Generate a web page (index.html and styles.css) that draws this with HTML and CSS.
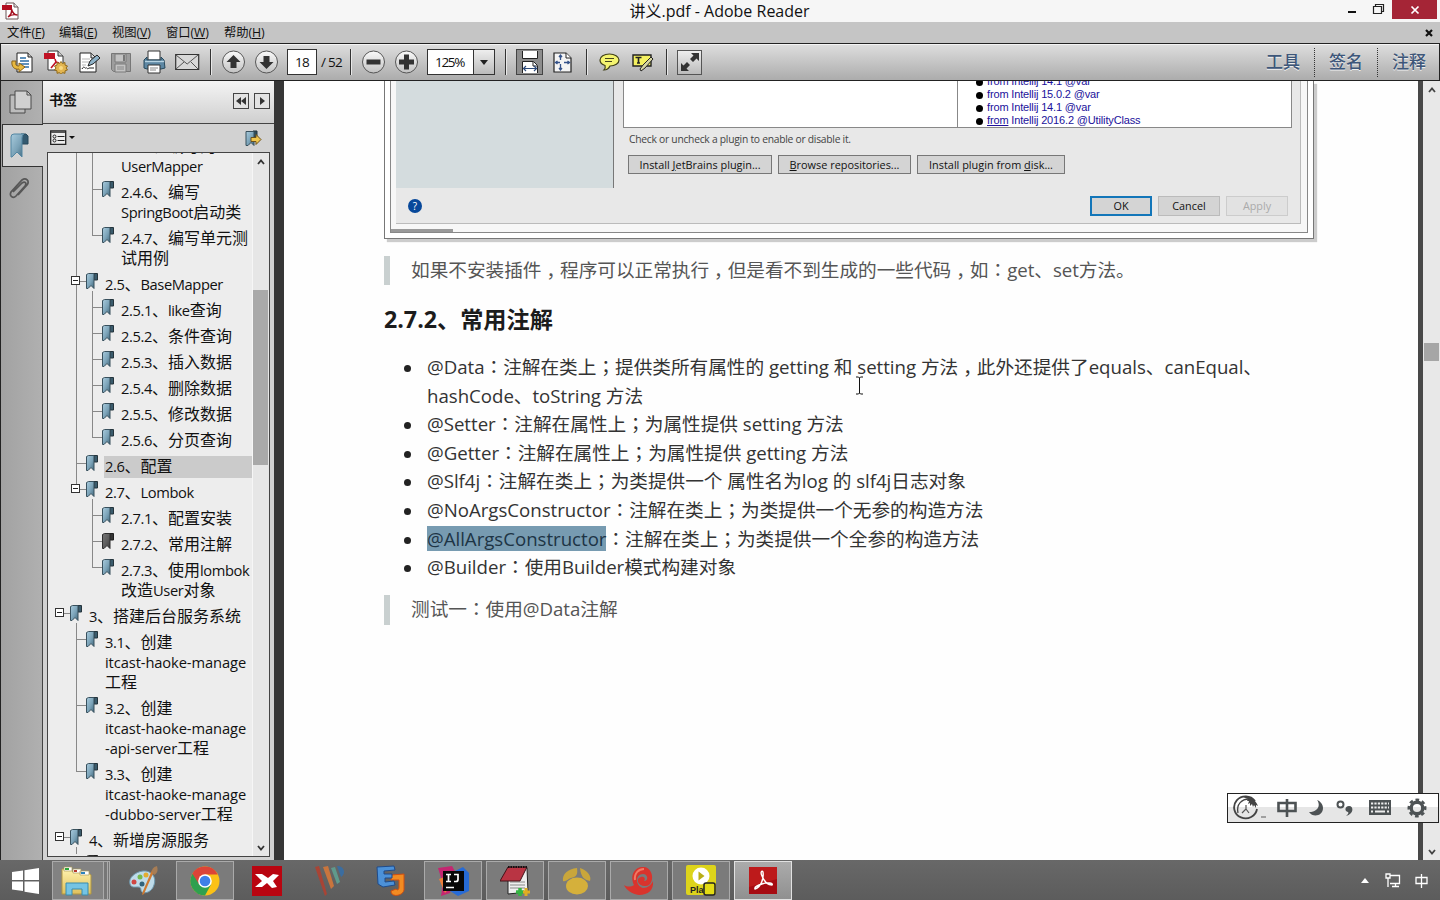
FILE: index.html
```html
<!DOCTYPE html>
<html lang="zh-CN">
<head>
<meta charset="utf-8">
<title>讲义.pdf - Adobe Reader</title>
<link rel="stylesheet" href="styles.css">
</head>
<body>
<svg class="defs" width="0" height="0">
  <defs>
    <linearGradient id="ribbon" x1="0" x2="1" y1="0" y2="1"><stop offset="0" stop-color="#a9cbdd"/><stop offset=".55" stop-color="#7ba3b8"/><stop offset="1" stop-color="#41677c"/></linearGradient>
    <linearGradient id="round" x1="0" x2="0" y1="0" y2="1"><stop offset="0" stop-color="#fafafa"/><stop offset="1" stop-color="#c2c2c2"/></linearGradient>
    <linearGradient id="folder" x1="0" x2="0" y1="0" y2="1"><stop offset="0" stop-color="#fff2ae"/><stop offset="1" stop-color="#dfc05c"/></linearGradient>
    <symbol id="bm" viewBox="0 0 13 17"><path d="M8 .5h3.500v6.500H8z" fill="#3a5b6c" stroke="#25343c"/><path d="M.5 1.500l2-1H8v15l-3-3-3 3H.5z" fill="url(#ribbon)" stroke="#38505d"/></symbol>
  </defs>
</svg>

<header class="titlebar">
  <svg class="app-icon" width="17" height="18" viewBox="0 0 17 18"><path d="M4 1h8l4 4v12H4z" fill="#fff" stroke="#6b5557"/><path d="M12 1v4h4" fill="#ddd" stroke="#6b5557"/><path d="M0 3h10v5H0z" fill="#b20d20"/><path d="M6 15c3-2 4-5 3.500-8 1 4 3 6 6 6-4-1-7 0-9.500 2z" fill="none" stroke="#a51020" stroke-width="1.400"/></svg>
  <h1>讲义.pdf - Adobe Reader</h1>
  <div class="winbtns">
    <svg width="44" height="22" viewBox="0 0 44 22"><path d="M0 12h8" stroke="#111" stroke-width="2"/><path d="M25.500 6.500h8v7h-8zM27.500 6V4.500h8v7H34" fill="none" stroke="#222" stroke-width="1.200"/></svg>
    <div class="close"><svg width="10" height="10" viewBox="0 0 10 10"><path d="M1.500 1.500l7 7m0-7l-7 7" stroke="#fff" stroke-width="1.700"/></svg></div>
  </div>
</header>

<nav class="menubar">
  <span>文件(<u>F</u>)</span><span>编辑(<u>E</u>)</span><span>视图(<u>V</u>)</span><span>窗口(<u>W</u>)</span><span>帮助(<u>H</u>)</span>
  <svg class="doc-close" width="8" height="8" viewBox="0 0 8 8"><path d="M1 1l6 6m0-6l-6 6" stroke="#111" stroke-width="2.200"/></svg>
</nav>

<div class="toolbar">
  <svg width="23" height="23" viewBox="0 0 23 23"><path d="M6 2h11l4 4v15H6z" fill="#fff" stroke="#222"/><path d="M17 2v4h4" fill="#ccc" stroke="#222"/><path d="M9 7h6M9 10h9M9 13h9M12 16h6" stroke="#2c6da5" stroke-width="1.500"/><path d="M1 10c-1 6 3 9 7 8v3l6-5-6-4v3c-3 0-4-1-3-5z" fill="#e8b93f" stroke="#8a6318"/></svg>
  <svg width="24" height="24" viewBox="0 0 24 24"><path d="M4 1h10l5 5v14H4z" fill="#fff" stroke="#333"/><path d="M14 1v5h5" fill="#ccc" stroke="#333"/><path d="M0 3h11v6H0z" fill="#c01325"/><path d="M7 18l5-6-1-3M12 12l3 1" fill="none" stroke="#c01325" stroke-width="1.600"/><path d="M17 11.500l1.500 2 2.500-1 0 2.600 2.500.9-1.500 2 1.500 2-2.500.8v2.500l-2.500-.7-1.500 2-1.500-2-2.500.7v-2.500l-2.500-.8 1.500-2-1.500-2 2.500-.9v-2.600l2.500 1z" fill="#e2b550" stroke="#906a1c"/><circle cx="17" cy="18" r="2" fill="#f9d980"/></svg>
  <svg width="22" height="23" viewBox="0 0 22 23"><path d="M1 2h11l5 5v14H1z" fill="#fff" stroke="#222"/><path d="M12 2v5h4" fill="#ddd" stroke="#222"/><path d="M3 8h8M3 11h7M3 14h4" stroke="#b5b5b5"/><path d="M3 18c2-4 3 0 4-1s1 2 3 0h5" fill="none" stroke="#222"/><path d="M9 15l2-5 7-6 3 3-7 6z" fill="#8eb2c8" stroke="#222"/></svg>
  <svg width="20" height="21" viewBox="0 0 20 21"><path d="M.5 1.500h19v18h-17l-2-2z" fill="#9d9d9d" stroke="#777"/><path d="M4 2h11v8H4zM4 12h11v8H4z" fill="#c3c3c3" stroke="#7a7a7a"/><path d="M12 3h2v6h-2z" fill="#777"/><path d="M6 15h7M6 17h7" stroke="#888"/></svg>
  <svg width="23" height="24" viewBox="0 0 23 24"><path d="M5 1h12v9H5z" fill="#fff" stroke="#333"/><path d="M1 10l3-3v3h14V7l3 3 1 8-4 1H4l-3-1z" fill="#5d87a3" stroke="#27495d"/><path d="M2 11.500h19" stroke="#b7d3e2" stroke-width="1.400"/><path d="M5 15h12v8H5z" fill="#fff" stroke="#333"/><path d="M7 18h8M7 20h6" stroke="#888"/></svg>
  <svg width="25" height="18" viewBox="0 0 25 18"><path d="M.7 1.500h23v15H.7z" fill="#d8d8d8" stroke="#333" stroke-width="1.200"/><path d="M1 2l11.200 9L23 2M1 16l8-7M23 16l-7-7" fill="none" stroke="#555"/></svg>
  <i class="sep"></i>
  <svg width="24" height="24" viewBox="0 0 24 24"><circle cx="11.500" cy="12" r="11" fill="url(#round)" stroke="#555"/><path d="M11.500 5l7 7h-4v6h-6v-6h-4z" fill="#333"/></svg>
  <svg width="24" height="24" viewBox="0 0 24 24"><circle cx="11.500" cy="12" r="11" fill="url(#round)" stroke="#555"/><path d="M11.500 19l7-7h-4V6h-6v6h-4z" fill="#333"/></svg>
  <div class="field page">18</div>
  <span class="total">/ 52</span>
  <i class="sep"></i>
  <svg width="24" height="24" viewBox="0 0 24 24"><circle cx="11.500" cy="12" r="11" fill="url(#round)" stroke="#555"/><path d="M4.500 9.500h14v5h-14z" fill="#333"/></svg>
  <svg width="24" height="24" viewBox="0 0 24 24"><circle cx="11.500" cy="12" r="11" fill="url(#round)" stroke="#555"/><path d="M9 4.500h5v5h5v5h-5v5H9v-5H4v-5h5z" fill="#333"/></svg>
  <div class="field zoom"><span>125%</span><b><svg width="8" height="5" viewBox="0 0 8 5"><path d="M0 0h8L4 5z" fill="#222"/></svg></b></div>
  <i class="sep"></i>
  <div class="pressed"><svg width="18" height="22" viewBox="0 0 18 22"><path d="M1.500 0v7.500h15V0" fill="#fff" stroke="#222"/><path d="M1.500 22V10.500h11l4 4V22" fill="#fff" stroke="#222"/><path d="M12 11v4h4" fill="none" stroke="#222"/><path d="M3 17.500h12M5 15l-2.500 2.500L5 20M13 15l2.500 2.500L13 20" fill="none" stroke="#2d4a7a" stroke-width="1.200"/></svg></div>
  <svg width="19" height="21" viewBox="0 0 19 21"><path d="M1 1h12l5 5v14H1z" fill="#f4f4f4" stroke="#222" stroke-width="1.200"/><path d="M13 1v5h5" fill="#fff" stroke="#222"/><path d="M7.500 3v5M7.500 12v6M2.500 10.500H7M11 10.500h5.500M6 5l1.500-2L9 5M6 16l1.500 2L9 16M4.500 9l-2 1.500 2 1.500M14.500 9l2 1.500-2 1.500" fill="none" stroke="#34528a" stroke-width="1.300"/></svg>
  <i class="sep"></i>
  <svg width="21" height="18" viewBox="0 0 21 18"><path d="M10.500 1c5 0 9.500 2.500 9.500 6s-4 6-9 6c-1 2-3 4-6 4 1-1 1.500-3 1-4.500C3 11.500 1 9.500 1 7c0-3.500 4-6 9.500-6z" fill="#f4f470" stroke="#3f3f18" stroke-width="1.200"/><path d="M6 5.500h9M6 8.500h7" stroke="#44441d" stroke-width="1.200"/></svg>
  <svg width="22" height="19" viewBox="0 0 22 19"><path d="M1 2h18v11H1z" fill="#f4f160" stroke="#222" stroke-width="1.400"/><path d="M3.500 4.500h6M6.500 4v6M5 10h3" stroke="#222" stroke-width="1.600"/><path d="M8 16l3-4 8-8 2 2-8 9-4 3z" fill="#d6d6a2" stroke="#222"/></svg>
  <i class="sep"></i>
  <div class="full"><svg width="22" height="22" viewBox="0 0 22 22"><path d="M20 2v8l-2.500-2.500-3.500 3.500-3-3 3.500-3.500L12 2zM2 20v-8l2.500 2.500L8 11l3 3-3.500 3.500L10 20z" fill="#333"/></svg></div>
  <span class="tool">工具</span><i class="dots"></i><span class="tool">签名</span><i class="dots"></i><span class="tool">注释</span>
</div>

<main class="work">
  <aside class="rail">
    <div class="rail-item"><svg width="23" height="25" viewBox="0 0 23 25"><path d="M1 5h15v18H1z" fill="#bcbcbc" stroke="#4a4a4a"/><path d="M6 1h12l4 4v14H6z" fill="#d0d0d0" stroke="#4a4a4a"/><path d="M18 1v4h4" fill="none" stroke="#4a4a4a"/></svg></div>
    <div class="rail-item on"><svg width="19" height="25" viewBox="0 0 19 25"><path d="M11 1h5l2 2v8h-6z" fill="#345a70" stroke="#26485a"/><path d="M1 4q0-3 3-3h10q-2 1-2 4v19l-5-5-5 5H1z" fill="url(#ribbon)" stroke="#5386a2"/></svg></div>
    <div class="rail-item clip"><svg width="24" height="24" viewBox="0 0 24 24"><path d="M6 15L15 6c3-2 5 0 3 3L9 19c-3 3-7 0-5-4L15 3c4-3 8 1 5 5l-9 10" fill="none" stroke="#575757" stroke-width="1.700"/></svg></div>
  </aside>

  <section class="panel">
    <div class="panel-head"><h2>书签</h2>
      <i class="mini"><svg width="10" height="8" viewBox="0 0 10 8"><path d="M5 0v8L0 4zM10 0v8L5 4z" fill="#333"/></svg></i>
      <i class="mini"><svg width="5" height="8" viewBox="0 0 5 8"><path d="M0 0v8l5-4z" fill="#333"/></svg></i>
    </div>
    <div class="panel-tools">
      <svg width="26" height="16" viewBox="0 0 26 16"><path d="M.7 1h15v13.300H.7z" fill="#ededed" stroke="#222" stroke-width="1.300"/><path d="M1 2.500h14" stroke="#555"/><circle cx="4.500" cy="6.500" r="1.500" fill="none" stroke="#222"/><circle cx="4.500" cy="10.500" r="1.500" fill="none" stroke="#222"/><path d="M7.500 6.500h7M7.500 10.500h7" stroke="#222"/><path d="M19 6h6l-3 3z" fill="#111"/></svg>
      <svg width="17" height="17" viewBox="0 0 17 17"><path d="M8 1h4v6H8z" fill="#2f4c5b" stroke="#25343c"/><path d="M1 1.500h8v14l-3-3-3 3H1z" fill="url(#ribbon)" stroke="#38505d"/><path d="M6 7.500h5V4.500l5 5-5 5v-3H6z" fill="#f0c64c" stroke="#6d521b"/></svg>
    </div>
    <div class="tree-box">
      <div class="tree-view">
        <ul class="tree">
          <li class="open bare"><ul>
            <li class="bare"><ul>
              <li><svg class="bm"><use href="#bm"/></svg><span class="t"><s>2.4.5</s>、编写的<br><s>UserMapper</s></span></li>
              <li><svg class="bm"><use href="#bm"/></svg><span class="t"><s>2.4.6</s>、编写<br><s>SpringBoot</s>启动类</span></li>
              <li><svg class="bm"><use href="#bm"/></svg><span class="t"><s>2.4.7</s>、编写单元测<br>试用例</span></li>
            </ul></li>
            <li><i class="box"></i><svg class="bm"><use href="#bm"/></svg><span class="t"><s>2.5</s>、<s>BaseMapper</s></span><ul>
              <li><svg class="bm"><use href="#bm"/></svg><span class="t"><s>2.5.1</s>、<s>like</s>查询</span></li>
              <li><svg class="bm"><use href="#bm"/></svg><span class="t"><s>2.5.2</s>、条件查询</span></li>
              <li><svg class="bm"><use href="#bm"/></svg><span class="t"><s>2.5.3</s>、插入数据</span></li>
              <li><svg class="bm"><use href="#bm"/></svg><span class="t"><s>2.5.4</s>、删除数据</span></li>
              <li><svg class="bm"><use href="#bm"/></svg><span class="t"><s>2.5.5</s>、修改数据</span></li>
              <li><svg class="bm"><use href="#bm"/></svg><span class="t"><s>2.5.6</s>、分页查询</span></li>
            </ul></li>
            <li><svg class="bm"><use href="#bm"/></svg><span class="t sel"><s>2.6</s>、配置</span></li>
            <li><i class="box"></i><svg class="bm"><use href="#bm"/></svg><span class="t"><s>2.7</s>、<s>Lombok</s></span><ul>
              <li><svg class="bm"><use href="#bm"/></svg><span class="t"><s>2.7.1</s>、配置安装</span></li>
              <li><svg class="bm current"><use href="#bm"/></svg><span class="t"><s>2.7.2</s>、常用注解</span></li>
              <li><svg class="bm"><use href="#bm"/></svg><span class="t"><s>2.7.3</s>、使用<s>lombok</s><br>改造<s>User</s>对象</span></li>
            </ul></li>
          </ul></li>
          <li><i class="box"></i><svg class="bm"><use href="#bm"/></svg><span class="t"><s>3</s>、搭建后台服务系统</span><ul>
            <li><svg class="bm"><use href="#bm"/></svg><span class="t"><s>3.1</s>、创建<br><s class="w">itcast-haoke-manage</s><br>工程</span></li>
            <li><svg class="bm"><use href="#bm"/></svg><span class="t"><s>3.2</s>、创建<br><s class="w">itcast-haoke-manage</s><br><s class="w">-api-server</s>工程</span></li>
            <li><svg class="bm"><use href="#bm"/></svg><span class="t"><s>3.3</s>、创建<br><s class="w">itcast-haoke-manage</s><br><s class="w">-dubbo-server</s>工程</span></li>
          </ul></li>
          <li><i class="box"></i><svg class="bm"><use href="#bm"/></svg><span class="t"><s>4</s>、新增房源服务</span><ul>
            <li><svg class="bm current"><use href="#bm"/></svg></li>
          </ul></li>
        </ul>
      </div>
      <div class="tree-scroll">
        <svg width="8" height="6" viewBox="0 0 8 6"><path d="M1 5l3-3.500L7 5" fill="none" stroke="#333" stroke-width="1.800"/></svg>
        <i class="thumb"></i>
        <svg width="8" height="6" viewBox="0 0 8 6"><path d="M1 1l3 3.500L7 1" fill="none" stroke="#333" stroke-width="1.800"/></svg>
      </div>
    </div>
  </section>

  <div class="splitter"><i></i></div>

  <article class="page-view">
    <div class="shot"><div class="shot-in"><div class="dialog">
      <div class="dlg-top">
        <div class="dlg-list"></div>
        <div class="dlg-main">
          <div class="dlg-panes"><div class="pane-a"></div>
            <ul class="pane-b"><li>from Intellij 14.1 @var</li><li>from Intellij 15.0.2 @var</li><li>from Intellij 14.1 @var</li><li><u>from</u> Intellij 2016.2 @UtilityClass</li></ul></div>
          <p class="hint">Check or uncheck a plugin to enable or disable it.</p>
          <div class="dlg-btns"><span>Install <u>J</u>etBrains plugin...</span><span><u>B</u>rowse repositories...</span><span>Install plugin from <u>d</u>isk...</span></div>
        </div>
      </div>
      <div class="dlg-foot"><i class="help">?</i><span class="ok">OK</span><span>Cancel</span><span class="off">Apply</span></div>
    </div><i class="hbar"></i></div></div>

    <blockquote class="q1">如果不安装插件<i class="cm">，</i>程序可以正常执行<i class="cm">，</i>但是看不到生成的一些代码<i class="cm">，</i>如<i class="pc">：</i>get、set方法。</blockquote>
    <h3>2.7.2、常用注解</h3>
    <ul class="notes">
      <li class="two">@Data<i class="pc">：</i>注解在类上<i class="pc">；</i>提供类所有属性的 getting 和 setting 方法<i class="cm">，</i>此外还提供了equals、canEqual、<br>hashCode、toString 方法</li>
      <li>@Setter<i class="pc">：</i>注解在属性上<i class="pc">；</i>为属性提供 setting 方法</li>
      <li>@Getter<i class="pc">：</i>注解在属性上<i class="pc">；</i>为属性提供 getting 方法</li>
      <li>@Slf4j<i class="pc">：</i>注解在类上<i class="pc">；</i>为类提供一个 属性名为log 的 slf4j日志对象</li>
      <li>@NoArgsConstructor<i class="pc">：</i>注解在类上<i class="pc">；</i>为类提供一个无参的构造方法</li>
      <li><mark>@AllArgsConstructor</mark><i class="pc">：</i>注解在类上<i class="pc">；</i>为类提供一个全参的构造方法</li>
      <li>@Builder<i class="pc">：</i>使用Builder模式构建对象</li>
    </ul>
    <blockquote class="q2">测试一<i class="pc">：</i>使用@Data注解</blockquote>
    <svg class="cursor" width="7" height="19" viewBox="0 0 7 19"><path d="M0 1h2.500l1 1 1-1H7M3.500 2v15M0 18h2.500l1-1 1 1H7" fill="none" stroke="#111"/></svg>
  </article>

  <div class="edge"></div>
  <div class="doc-scroll">
    <svg width="8" height="6" viewBox="0 0 8 6"><path d="M1 5l3-3.500L7 5" fill="none" stroke="#444" stroke-width="1.800"/></svg>
    <i class="thumb"></i>
    <svg width="8" height="6" viewBox="0 0 8 6"><path d="M1 1l3 3.500L7 1" fill="none" stroke="#444" stroke-width="1.800"/></svg>
  </div>
</main>

<div class="ime">
  <svg width="34" height="26" viewBox="0 0 34 26"><path d="M22 6A11.500 11 0 1 0 24 14" fill="none" stroke="#444" stroke-width="1.800"/><path d="M5 18C3 9 9 4 16 4" fill="none" stroke="#444" stroke-width="1.300"/><path d="M10 2c5-2 12 1 15 9l-2-1v3l-2-3-1 2-1-3-2 2v-3l-2 1 1-3-2 0 1-2z" fill="#444"/><path d="M9 18l4-4v-4M13 14l3 4" stroke="#555" fill="none" stroke-width="1.200"/><path d="M28 22h5" stroke="#888" stroke-width="1.500"/></svg>
  <svg width="20" height="20" viewBox="0 0 20 20"><path d="M1.500 5h17v8h-17zM10 1v18" fill="none" stroke="#4d5254" stroke-width="2.600"/></svg>
  <svg width="16" height="18" viewBox="0 0 16 18"><path d="M9 1c4 5 1 12-8 12 4 6 14 4 14-4 0-4-3-7-6-8z" fill="#4d5254"/></svg>
  <svg width="18" height="17" viewBox="0 0 18 17"><circle cx="4.500" cy="4.500" r="3" fill="none" stroke="#4d5254" stroke-width="2"/><path d="M13 6c5 0 5 8-3 10 2-2 3-3 2-4-4-1-3-6 1-6z" fill="#4d5254"/></svg>
  <svg width="22" height="16" viewBox="0 0 22 16"><path d="M0 0h22v15H0z" fill="#4d5254"/><path d="M2 3.500h18M2 7.500h18M2 11.500h2M18 11.500h2" stroke="#eee" stroke-width="2.200" stroke-dasharray="2.200 1.200"/><path d="M6 11.500h10" stroke="#eee" stroke-width="2"/></svg>
  <svg width="20" height="20" viewBox="0 0 20 20"><circle cx="10" cy="10" r="5.800" fill="none" stroke="#4d5254" stroke-width="3.400"/><circle cx="10" cy="10" r="8.200" fill="none" stroke="#4d5254" stroke-width="2.600" stroke-dasharray="3.600 2.840" transform="rotate(-12 10 10)"/></svg>
</div>

<footer class="taskbar">
  <div class="start"><svg width="27" height="26" viewBox="0 0 27 26"><path d="M0 4l11-1.600V12H0zM12.500 2.200L27 0v12H12.500zM0 13.500h11v9.600L0 21.500zM12.500 13.500H27V26l-14.500-2.200z" fill="#fff"/></svg></div>
  <div class="task lit multi"><svg width="32" height="30" viewBox="0 0 32 30"><path d="M1 3h9l2 3h14l4 3v19H1z" fill="url(#folder)" stroke="#b19743"/><path d="M3 1h8v4H3zM12 3h8v4h-8zM19 5h9v4h-9z" fill="#fff" stroke="#a99b5c" stroke-width=".7"/><path d="M4 2h4v2H4z" fill="#2da53b"/><path d="M13 4h3v2h-3z" fill="#b8382c"/><path d="M20 6h4v2h-4z" fill="#2c83bd"/><path d="M5 29V17h22v12h-6v-6H11v6z" fill="#75c4e4" stroke="#3b8cae"/></svg></div>
  <div class="task"><svg width="31" height="30" viewBox="0 0 31 30"><path d="M15 5c8-1 14 6 11 14-2 7-9 9-12 7-2-2 0-5-4-5-3 0-7 1-8-3C0 12 7 6 15 5z" fill="#bfdcea" stroke="#6f98ad"/><circle cx="12" cy="11" r="2.500" fill="#76b94d"/><circle cx="18" cy="9" r="2.500" fill="#e3ad30"/><circle cx="6" cy="16" r="2.500" fill="#d04743"/><circle cx="14" cy="18" r="2.500" fill="#32637c"/><path d="M27 3L16 28l-2 1 1-4L24 4z" fill="#cf7a31"/><path d="M24 6c0-4 2-5 5-6 1 4 1 7-3 9z" fill="#a77d55"/></svg></div>
  <div class="task lit"><svg width="30" height="30" viewBox="0 0 30 30"><circle cx="15" cy="15" r="14.500" fill="#fbc116"/><path d="M15 15L2.400 7.700A14.500 14.500 0 0 0 15 29.500l6-11z" fill="#2fa04f"/><path d="M15 8.500h12.800A14.500 14.500 0 0 0 2.400 7.700L9 18l6-3z" fill="#dc4437"/><circle cx="15" cy="15" r="6.800" fill="#fff"/><circle cx="15" cy="15" r="5.300" fill="#3f7fe8"/></svg></div>
  <div class="task"><svg width="30" height="30" viewBox="0 0 30 30"><path d="M0 0h30v30H0z" fill="#b90510"/><path d="M3 8l7 0 6 4 5-4 6 1-6 6 4 6-5 1-5-5-5 4-7 0 7-6z" fill="#fff"/></svg></div>
  <div class="task"><svg width="33" height="30" viewBox="0 0 33 30"><path d="M2 1l4-1 8 28-2 2z" fill="#a84435"/><path d="M10 1l5-1 6 20-3 3z" fill="#c9753d"/><path d="M18 2l4-1 5 15-3 2z" fill="#5f9a8c"/><path d="M24 0c8 0 9 8 4 11z" fill="#3b6da0"/></svg></div>
  <div class="task"><svg width="30" height="31" viewBox="0 0 30 31"><path d="M15 10l13-1v16c-1 6-13 8-13 1l5-2c2 2 3 0 3-2v-7h-8z" fill="#f28b22" stroke="#cf4e10"/><path d="M1 2l17-1 1 4-11 1v3h8v4H9v4l9-1 1 4-12 2-5-3z" fill="#4c91d8" stroke="#1e4b8b"/></svg></div>
  <div class="task lit"><svg width="32" height="32" viewBox="0 0 32 32"><path d="M1 3l14-2 4 7-6 20-9 3 2-12z" fill="#c42671"/><path d="M2 14l8-3 5 9-7 8z" fill="#ee803b"/><path d="M18 6l8-4 6 6v18l-11 5-8-5z" fill="#276bd6"/><path d="M6 6h21v20H6z" fill="#080808"/><path d="M9 9.500h5M11.500 9v7M9 16.500h5M17 9.500h4v5q0 2-2 2h-2M9 22.500h8" fill="none" stroke="#fff" stroke-width="1.700"/></svg></div>
  <div class="task lit"><svg width="30" height="31" viewBox="0 0 30 31"><path d="M8 3h19l1 24-20 2z" fill="#eee" stroke="#222"/><path d="M10 17h15M10 20h15M10 23h15" stroke="#888"/><path d="M8 2h19l-7 14H0z" fill="#b93443" stroke="#431319"/><path d="M8 2h19" stroke="#111" stroke-width="2" stroke-dasharray="1.500 1"/><path d="M20 23v8M16 27h8" stroke="#35b443" stroke-width="3.500"/><path d="M26 23v8M23 27h7" stroke="#e0ad22" stroke-width="3"/></svg></div>
  <div class="task lit"><svg width="30" height="28" viewBox="0 0 30 28"><ellipse cx="15" cy="19" rx="11" ry="8.500" fill="#d5b03b"/><path d="M1 14C0 7 6 2 15 1c1 7-1 9-6 10-3 1-5 4-8 3zM18 1c7 2 12 8 10 13-5-1-9-3-10-13z" fill="#c9a63b"/></svg></div>
  <div class="task lit"><svg width="32" height="29" viewBox="0 0 32 29"><path d="M1 19c3 2 7 2 10 0C6 8 13 0 21 1c10 1 11 18 2 19-8 1-11-8-5-9 3-1 5 2 3 4 5 0 4-7-1-7-8 0-8 12 0 14 5 0 8-3 10-7 1 9-5 14-14 14C9 28 3 24 1 19z" fill="#d9342d"/><path d="M12 14c-1-7 4-11 9-11" fill="none" stroke="#f17964" stroke-width="2"/></svg></div>
  <div class="task lit"><svg width="30" height="31" viewBox="0 0 30 31"><rect width="30" height="30" rx="2" fill="#ddd41b"/><circle cx="15" cy="11" r="8.500" fill="#fff"/><path d="M12.500 6.500v9l6-4.500z" fill="#b9ae17"/><text x="4" y="28" class="play">Play</text><rect x="18" y="18" width="11" height="12" rx="2" fill="#e3dc14" stroke="#222" stroke-width="1.500"/></svg></div>
  <div class="task lit active"><svg width="28" height="27" viewBox="0 0 28 27"><path d="M0 0h28v27H0z" fill="#a60b12"/><path d="M0 0h28v12L0 20z" fill="#bd1a1b"/><path d="M6 22c6-2 9-10 8-17-1-2-3 0-1 4 2 5 5 9 10 9 2-2-5-3-10-1-4 1-8 3-7 5z" fill="none" stroke="#fff" stroke-width="1.400"/></svg></div>
  <div class="tray">
    <svg width="8" height="5" viewBox="0 0 8 5"><path d="M0 5h8L4 0z" fill="#fff"/></svg>
    <svg width="16" height="15" viewBox="0 0 16 15"><path d="M5 2.500h9.500v8H5M7 13.500h7M10.500 11v3" fill="none" stroke="#fff" stroke-width="1.300"/><path d="M1 1h4v4H1zM3 5v9" fill="none" stroke="#fff" stroke-width="1.300"/></svg>
    <svg width="13" height="14" viewBox="0 0 13 14"><path d="M1 3.500h11v6H1zM6.500 0v14" fill="none" stroke="#fff" stroke-width="1.300"/></svg>
  </div>
</footer>
</body>
</html>
```

FILE: styles.css
```css
* { box-sizing: border-box; }
body { margin: 0; width: 1440px; height: 900px; overflow: hidden; display: flex; flex-direction: column; position: relative; font-family: "Open Sans", "Noto Sans CJK SC", sans-serif; color: #111; }
i { font-style: normal; display: block; }
svg { display: block; flex: none; }
h1, h2, h3, p, ul, blockquote { margin: 0; padding: 0; font-weight: normal; list-style: none; }
.defs { position: absolute; }

/* Window chrome */
.titlebar { flex: none; height: 22px; background: #f6f6f6; display: flex; align-items: flex-start; padding-left: 2px; }
.app-icon { margin-top: 2px; }
.titlebar h1 { flex: 1; text-align: center; font-size: 16px; line-height: 23px; letter-spacing: 0; padding-left: 72px; }
.winbtns { display: flex; }
.winbtns .close { width: 45px; height: 19px; background: #a52536; display: grid; place-items: center; margin-right: 3px; }
.menubar { flex: none; height: 21px; background: #c5c5c5; display: grid; grid-template-columns: 52px 53px 54px 58px 1fr auto; align-items: center; padding: 0 7px 0 7px; font-size: 12.300px; line-height: 20px; }
.menubar span { white-space: nowrap; letter-spacing: -.1px; }

.toolbar { flex: none; height: 38px; border: 1px solid #222; background: linear-gradient(#dedede, #acacac); box-shadow: inset 0 1px #f4f4f4; padding-left: 10px; display: grid; align-items: center; grid-template-columns: 33px 35px 32px 32px 32px 35px 12px 33px 32px 34px 29px 12px 33px 32px 78px 11px 37px 33px 13px 33px 34px 11px 589px 48px 15px 48px 15px 47px; }
.sep { width: 2px; height: 26px; background: #333; border-right: 1px solid #e8e8e8; }
.dots { height: 29px; border-left: 1px dotted #333; }
.field { height: 26px; border: 1px solid #333; background: #fff; font-size: 13.500px; line-height: 24px; letter-spacing: -.8px; }
.field.page { width: 30px; text-align: center; }
.total { font-size: 13.500px; letter-spacing: -.7px; white-space: nowrap; }
.field.zoom { width: 68px; display: flex; }
.field.zoom span { width: 45px; padding-left: 7px; letter-spacing: -1.300px; }
.field.zoom b { flex: 1; border-left: 1px solid #333; background: linear-gradient(#eee, #bbb); display: grid; place-items: center; }
.pressed { width: 27px; height: 26px; background: #8d8d8d; border: 1px solid #444; display: grid; place-items: center; }
.full { width: 25px; height: 25px; border: 1px solid #555; background: linear-gradient(#eee, #bbb); display: grid; place-items: center; }
.tool { color: #3d5679; font-size: 17px; font-weight: 500; line-height: 30px; text-shadow: 0 1px #eee; white-space: nowrap; }

/* Work area */
.work { flex: none; height: 779px; display: flex; background: #333; }
.rail { width: 43px; background: linear-gradient(90deg, #a2a2a2, #b0b0b0); border-left: 1px solid #222; border-right: 1px solid #444; }
.rail-item { height: 43px; display: grid; place-items: center; padding-right: 3px; }
.rail-item.on { background: #d2d2d2; border: 1px solid #333; border-right: 0; margin: 0 -1px 0 1px; padding-right: 7px; }
.rail-item.clip { height: 43px; padding-right: 6px; }
.panel { width: 231px; background: #d2d2d2; display: flex; flex-direction: column; }
.panel-head { height: 43px; border-bottom: 1px solid #444; background: linear-gradient(#f4f4f4, #cfcfcf); display: flex; align-items: center; gap: 5px; padding: 0 4px 3px 6px; }
.panel-head h2 { flex: 1; font-size: 14px; font-weight: bold; line-height: 20px; padding-bottom: 2px; }
.mini { width: 16px; height: 16px; border: 1px solid #444; background: #e2e2e2; display: grid; place-items: center; }
.panel-tools { height: 28px; display: flex; justify-content: space-between; align-items: center; padding: 0 12px 0 7px; }
.tree-box { flex: none; width: 223px; height: 705px; margin-left: 4px; border: 1px solid #444; background: #ededed; display: flex; }
.tree-view { flex: 1; overflow: hidden; font-size: 16px; }
.tree { margin: -17px 0 0 12px; }
.tree li { position: relative; padding-left: 29px; }
.tree li.bare { padding: 0; }
.tree li > ul { margin-left: -13px; }
.tree li.bare > ul { margin-left: 16px; }
.tree .t { display: block; min-height: 26px; line-height: 20px; white-space: nowrap; padding-bottom: 6px; }
.tree .t.sel { background: linear-gradient(#cbcbcb, #cbcbcb) 0 0 / 100% 22px no-repeat; margin-left: -1px; padding-left: 1px; }
.tree s { text-decoration: none; font-size: 14.700px; letter-spacing: -.4px; }
.tree s.w { letter-spacing: -.1px; }
.bm { position: absolute; left: 10px; top: -1px; width: 13px; height: 17px; }
.bm.current { filter: grayscale(1) brightness(.6); }
.tree ul > li::before { content: ""; position: absolute; left: 0; top: 0; bottom: 0; border-left: 1px solid #888; }
.tree ul > li:first-child::before { top: -9px; }
.tree ul > li:last-child::before { bottom: auto; height: 7px; }
.tree li::after { content: ""; position: absolute; left: 0; top: 7px; width: 10px; border-top: 1px solid #888; }
.tree li.bare::after { display: none; }
.tree li.open::before { display: none; }
.box { position: absolute; z-index: 1; left: -5px; top: 2px; width: 9px; height: 9px; border: 1px solid #333; background: #fff; }
.box::after { content: ""; position: absolute; left: 1px; top: 3px; width: 5px; border-top: 1px solid #222; }
.tree-scroll { width: 17px; background: #e6e6e6; display: flex; flex-direction: column; align-items: center; border-left: 1px solid #f6f6f6; padding: 6px 1px 5px 0; }
.tree-scroll .thumb { width: 15px; height: 175px; background: #a9a9a9; margin: 125px 0 auto; }
.splitter { width: 10px; background: #363636; }
.splitter i { width: 5px; height: 50px; margin: 364px 0 0 1px; background: radial-gradient(#aaa 35%, transparent 45%) 0 0 / 2px 2px; }
.edge { width: 5px; background: #484848; }
.doc-scroll { width: 17px; background: #e8e8e8; display: flex; flex-direction: column; align-items: center; padding: 6px 0 5px; }
.doc-scroll .thumb { width: 15px; height: 18px; background: #a6a6a6; margin: 250px 0 auto; }

/* Document */
.page-view { width: 1134px; padding-left: 100px; background: #fefefe; overflow: hidden; position: relative; }
.shot { width: 930px; height: 158px; border: 1px solid #777; border-top: 0; box-shadow: 3px 3px 1px #ccc; padding: 0 5px 5px; background: #fff; }
.shot-in { height: 152px; border: 1px solid #888; border-top: 0; background: #f7f7f7; padding: 0 6px 0 5px; }
.dialog { height: 143px; border-bottom: 1px solid #bbb; border-right: 1px solid #bbb; background: #e8e8e8; display: flex; flex-direction: column; }
.dlg-top { display: flex; height: 107px; }
.dlg-list { width: 218px; background: #d4dcde; border-right: 1px solid #777; }
.dlg-main { padding-left: 9px; font-size: 10.900px; }
.dlg-panes { display: flex; width: 669px; height: 47px; border: 1px solid #888; border-top: 0; background: #fff; overflow: hidden; }
.pane-a { width: 334px; border-right: 1px solid #888; }
.pane-b { font: 11px/13px "Liberation Sans", sans-serif; color: #21119b; padding-left: 18px; margin-top: -6px; }
.pane-b li { position: relative; padding-left: 11px; white-space: nowrap; letter-spacing: -.15px; }
.pane-b li::before { content: ""; position: absolute; left: 0; top: 4px; width: 7px; height: 7px; border-radius: 50%; background: #000; }
.hint { padding-left: 6px; line-height: 22px; color: #444; font-size: 10.300px; letter-spacing: -.26px; height: 26px; }
.dlg-btns { display: flex; gap: 6px; padding: 1px 0 0 5px; }
.dlg-btns span { height: 19px; border: 1px solid #777; background: #d4d4d4; line-height: 17px; text-align: center; white-space: nowrap; color: #111; }
.dlg-btns span:nth-child(1) { width: 144px; }
.dlg-btns span:nth-child(2) { width: 133px; }
.dlg-btns span:nth-child(3) { width: 148px; }
.dlg-foot { display: flex; align-items: center; font-size: 10.800px; gap: 6px; padding: 0 12px; height: 35px; }
.dlg-foot span { width: 62px; height: 20px; border: 1px solid #bbb; background: #d4d4d4; text-align: center; line-height: 18px; }
.dlg-foot .ok { border: 2px solid #1376b9; line-height: 16px; }
.dlg-foot .off { background: #e2e2e2; color: #aaa; border-color: #ccc; }
.help { width: 14px; height: 14px; border-radius: 50%; background: #07489a; color: #fff; font-size: 10px; line-height: 14px; text-align: center; margin-right: auto; }
.hbar { width: 62px; height: 3px; background: #999; margin: 5px 0 0 -5px; }
.pc, .cm { display: inline; line-height: 0; }
.pc { -webkit-locale: "ja"; font-family: "Noto Sans CJK JP", sans-serif; }
.cm { -webkit-locale: "zh-TW"; font-family: "Noto Sans CJK TC", sans-serif; position: relative; top: 6px; }
blockquote { height: 29px; border-left: 6px solid #c9d0d0; padding-left: 21px; font-size: 18.670px; line-height: 28px; color: #555; white-space: nowrap; letter-spacing: -.03px; }
.q1 { margin-top: 17px; }
.q2 { height: 30px; margin-top: 13px; }
h3 { font-size: 23.200px; line-height: 34px; height: 34px; font-weight: bold; margin: 17px 0 17px; color: #1c1c1c; }
.notes { padding-left: 43px; font-size: 18.670px; line-height: 28.600px; color: #333; white-space: nowrap; letter-spacing: -.02px; }
.notes li { position: relative; height: 28.600px; }
.notes li.two { height: 57.200px; }
.notes li::before { content: ""; position: absolute; left: -23px; top: 12px; width: 7px; height: 7px; border-radius: 50%; background: #222; }
.notes mark { background: linear-gradient(#779bb1, #779bb1) 0 50% / 100% 25px no-repeat; color: #1d3445; }
.cursor { position: absolute; left: 572px; top: 295px; }

/* Input method bar */
.ime { position: absolute; left: 1227px; top: 793px; width: 212px; height: 30px; border: 1px solid #222; background: linear-gradient(#fff 45%, #e6e6e6 46%); display: grid; align-items: center; padding-left: 5px; grid-template-columns: 44px 31px 28px 33px 38px 30px; }

/* Taskbar */
.taskbar { flex: none; height: 40px; background: linear-gradient(#686868, #5c5c5c); display: grid; grid-template-columns: 52px repeat(12, 62px) 1fr; align-items: center; padding-top: 1px; }
.start { padding-left: 12px; }
.task { width: 58px; height: 39px; display: grid; place-items: center; border: 1px solid transparent; }
.task.lit { background: #7b7b7b; border-color: #aaa; }
.task.multi { background: linear-gradient(90deg, #828282 50px, #aaa 50px, #aaa 51px, #777 51px, #777 54px, #aaa 54px, #aaa 55px, #777 55px); padding-right: 8px; }
.task.active { background: linear-gradient(#ababab, #909090); border-color: #e1e1e1; }
.play { font: bold 9px "Liberation Sans", sans-serif; fill: #222; }
.tray { justify-self: end; display: flex; align-items: center; gap: 14px; padding-right: 12px; }
.tray svg:first-child { margin-right: 2px; }
```
